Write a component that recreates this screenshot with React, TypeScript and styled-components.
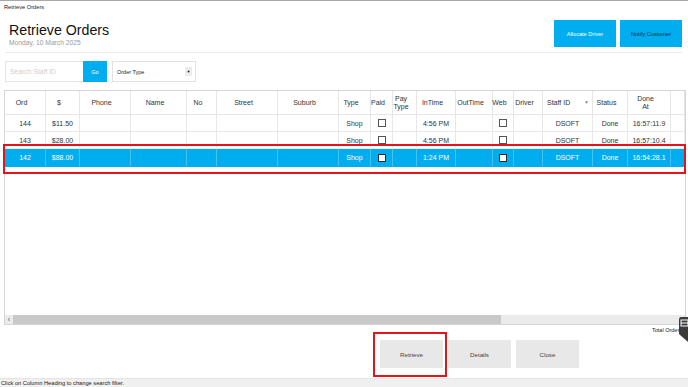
import React from "react";
import styled, { createGlobalStyle } from "styled-components";

const GlobalStyle = createGlobalStyle`
  html, body { margin: 0; padding: 0; background: #fff; }
  body { font-family: "Liberation Sans", Arial, sans-serif; color: #333; }
  * { box-sizing: border-box; }
`;

type Col = { k: string; label: string; w: number; sort?: boolean };

const cols: Col[] = [
  { k: "ord", label: "Ord", w: 41 },
  { k: "amt", label: "$", w: 34 },
  { k: "phone", label: "Phone", w: 51 },
  { k: "name", label: "Name", w: 56 },
  { k: "no", label: "No", w: 30 },
  { k: "street", label: "Street", w: 61 },
  { k: "suburb", label: "Suburb", w: 61 },
  { k: "type", label: "Type", w: 32 },
  { k: "paid", label: "Paid", w: 22 },
  { k: "payType", label: "Pay\nType", w: 24 },
  { k: "inTime", label: "InTime", w: 39 },
  { k: "outTime", label: "OutTime", w: 37 },
  { k: "web", label: "Web", w: 21 },
  { k: "driver", label: "Driver", w: 29 },
  { k: "staff", label: "Staff ID", w: 50, sort: true },
  { k: "status", label: "Status", w: 35 },
  { k: "doneAt", label: "Done\nAt", w: 43 },
  { k: "extra", label: "", w: 14 },
];

const template = cols.map((c) => `${c.w}px`).join(" ");

type Row = Record<string, string | boolean>;
const rows: Row[] = [
  { ord: "144", amt: "$11.50", type: "Shop", paid: false, inTime: "4:56 PM", web: false, staff: "DSOFT", status: "Done", doneAt: "16:57:11.9" },
  { ord: "143", amt: "$28.00", type: "Shop", paid: false, inTime: "4:56 PM", web: false, staff: "DSOFT", status: "Done", doneAt: "16:57:10.4" },
  { ord: "142", amt: "$88.00", type: "Shop", paid: false, inTime: "1:24 PM", web: false, staff: "DSOFT", status: "Done", doneAt: "16:54:28.1", selected: true },
];

const Window = styled.div`
  position: relative;
  width: 688px;
  height: 387px;
  overflow: hidden;
  display: flex;
  flex-direction: column;
  background: #fff;
`;

const TitleBar = styled.div`
  height: 14px;
  border-top: 1px solid #a8a8a8;
  padding: 2px 0 0 4px;
  font-size: 5.7px;
  line-height: 8px;
  color: #222;
`;

const Header = styled.div`
  height: 39px;
  margin: 0 6px 0 5px;
  border-bottom: 1px solid #ececec;
  display: flex;
  justify-content: space-between;
  align-items: flex-start;
`;

const TitleBlock = styled.div`
  padding: 8px 0 0 4px;
  display: flex;
  flex-direction: column;
`;

const Title = styled.div`
  font-size: 14.2px;
  line-height: 16px;
  color: #111;
`;

const DateText = styled.div`
  margin-top: 1px;
  font-size: 6.7px;
  line-height: 8px;
  color: #9a9a9a;
`;

const HeaderButtons = styled.div`
  display: flex;
  gap: 4px;
  margin-top: 6px;
`;

const BlueButton = styled.button<{ $dark?: boolean }>`
  width: 62px;
  height: 27px;
  border: none;
  padding: 0;
  background: #00aeef;
  color: ${(p) => (p.$dark ? "#1c2a36" : "#ffffff")};
  font-family: inherit;
  font-size: 5.6px;
`;

const Toolbar = styled.div`
  margin-top: 8px;
  height: 21px;
  padding-left: 5px;
  display: flex;
  align-items: stretch;
`;

const SearchInput = styled.div`
  width: 78px;
  border: 1px solid #e4e4e4;
  border-right: none;
  padding-left: 4px;
  display: flex;
  align-items: center;
  font-size: 6.8px;
  color: #cfcfcf;
`;

const GoButton = styled.div`
  width: 24px;
  background: #00aeef;
  color: #fff;
  font-size: 5.5px;
  display: flex;
  align-items: center;
  justify-content: center;
`;

const Select = styled.div`
  width: 84px;
  margin-left: 5px;
  border: 1px solid #e2e2e2;
  display: flex;
  align-items: center;
  justify-content: space-between;
  padding: 0 3px 0 4px;
  font-size: 5.5px;
  color: #222;
`;

const SelectArrow = styled.span`
  width: 7px;
  height: 9px;
  background: #ececec;
  display: flex;
  align-items: center;
  justify-content: center;
  font-size: 4px;
  color: #111;
`;

const TableBox = styled.div`
  margin: 8px 2px 0 4px;
  height: 235px;
  border: 1px solid #d6d6d6;
  display: flex;
  flex-direction: column;
  overflow: hidden;
`;

const GridRow = styled.div<{ $h: number; $sel?: boolean }>`
  display: grid;
  grid-template-columns: ${template};
  height: ${(p) => p.$h}px;
  flex: none;
  background: ${(p) => (p.$sel ? "#00aeef" : "#fff")};
  color: ${(p) => (p.$sel ? "#fff" : "#333")};
`;

const HeadCell = styled.div<{ $sort?: boolean }>`
  border-right: 1px solid #e6e6e6;
  border-bottom: 1px solid #e6e6e6;
  display: flex;
  align-items: center;
  justify-content: ${(p) => (p.$sort ? "space-between" : "center")};
  padding: ${(p) => (p.$sort ? "0 3px 0 4px" : "0 7px 0 0")};
  font-size: 7px;
  line-height: 7.5px;
  text-align: center;
  white-space: pre-line;
  color: #333;
`;

const SortGlyph = styled.span`
  font-size: 5px;
  color: #888;
`;

const Cell = styled.div<{ $sel?: boolean }>`
  border-right: 1px solid ${(p) => (p.$sel ? "#43c3f3" : "#e8e8e8")};
  border-bottom: 1px solid ${(p) => (p.$sel ? "#00aeef" : "#e8e8e8")};
  display: flex;
  align-items: center;
  justify-content: center;
  font-size: 7px;
  white-space: nowrap;
  overflow: hidden;
  color: ${(p) => (p.$sel ? "#ffffff" : "#333333")};
`;

const Check = styled.span<{ $sel?: boolean }>`
  width: 8px;
  height: 8px;
  border: 1px solid ${(p) => (p.$sel ? "#2a2a2a" : "#555")};
  background: #fff;
`;

const Filler = styled.div`
  flex: 1;
  background: #fff;
`;

const HScroll = styled.div`
  height: 9px;
  flex: none;
  background: #ebebeb;
  display: flex;
  align-items: center;
`;

const ScrollArrow = styled.span`
  width: 8px;
  font-size: 7px;
  line-height: 9px;
  color: #555;
  text-align: center;
`;

const ScrollThumb = styled.div`
  width: 488px;
  height: 9px;
  background: #c9c9c9;
`;

const TotalRow = styled.div`
  height: 9px;
  padding-right: 6px;
  display: flex;
  justify-content: flex-end;
  align-items: center;
  font-size: 5.5px;
  color: #222;
`;

const ButtonRow = styled.div`
  margin-top: 6px;
  padding-left: 380px;
  display: flex;
  gap: 5px;
`;

const GrayButton = styled.button`
  width: 63px;
  height: 28px;
  border: none;
  padding: 0;
  background: #e8e8e8;
  color: #444;
  font-family: inherit;
  font-size: 6.2px;
`;

const Spacer = styled.div`
  flex: 1;
`;

const StatusBar = styled.div`
  height: 9px;
  background: #f0f0f0;
  border-top: 1px solid #e4e4e4;
  padding-left: 1px;
  font-size: 5.7px;
  line-height: 8px;
  color: #222;
`;

const Highlight = styled.div<{ $l: number; $t: number; $w: number; $h: number }>`
  position: absolute;
  left: ${(p) => p.$l}px;
  top: ${(p) => p.$t}px;
  width: ${(p) => p.$w}px;
  height: ${(p) => p.$h}px;
  border: 2px solid #e3151b;
  pointer-events: none;
`;

const SideTab = styled.div`
  position: absolute;
  right: 0;
  top: 317px;
  width: 10px;
  height: 25px;
`;

function renderCell(r: Row, c: Col) {
  const v = r[c.k];
  if (c.k === "paid" || c.k === "web") return <Check $sel={!!r.selected} />;
  return typeof v === "string" ? v : "";
}

export default function App() {
  return (
    <>
      <GlobalStyle />
      <Window>
        <TitleBar>Retrieve Orders</TitleBar>
        <Header>
          <TitleBlock>
            <Title>Retrieve Orders</Title>
            <DateText>Monday, 10 March 2025</DateText>
          </TitleBlock>
          <HeaderButtons>
            <BlueButton>Allocate Driver</BlueButton>
            <BlueButton $dark>Notify Customer</BlueButton>
          </HeaderButtons>
        </Header>
        <Toolbar>
          <SearchInput>Search Staff ID</SearchInput>
          <GoButton>Go</GoButton>
          <Select>
            <span>Order Type</span>
            <SelectArrow>▼</SelectArrow>
          </Select>
        </Toolbar>
        <TableBox>
          <GridRow $h={24}>
            {cols.map((c) => (
              <HeadCell key={c.k} $sort={c.sort}>
                <span>{c.label}</span>
                {c.sort && <SortGlyph>▼</SortGlyph>}
              </HeadCell>
            ))}
          </GridRow>
          {rows.map((r, i) => (
            <GridRow key={i} $h={r.selected ? 18 : 17} $sel={!!r.selected}>
              {cols.map((c) => (
                <Cell key={c.k} $sel={!!r.selected}>
                  {renderCell(r, c)}
                </Cell>
              ))}
            </GridRow>
          ))}
          <Filler />
          <HScroll>
            <ScrollArrow>‹</ScrollArrow>
            <ScrollThumb />
          </HScroll>
        </TableBox>
        <TotalRow>Total Orders</TotalRow>
        <ButtonRow>
          <GrayButton>Retrieve</GrayButton>
          <GrayButton>Details</GrayButton>
          <GrayButton>Close</GrayButton>
        </ButtonRow>
        <Spacer />
        <StatusBar>Click on Column Heading to change search filter.</StatusBar>

        <Highlight $l={3} $t={144} $w={683} $h={30} />
        <Highlight $l={373} $t={332} $w={74} $h={45} />
        <SideTab>
          <svg width="10" height="25" viewBox="0 0 10 25">
            <path d="M3 0 H10 V25 L1 17 V3 Q1 0 3 0 Z" fill="#3b3b3b" />
            <rect x="3" y="3" width="7" height="6" fill="none" stroke="#fff" strokeWidth="1" />
            <line x1="3" y1="6" x2="10" y2="6" stroke="#fff" strokeWidth="1" />
          </svg>
        </SideTab>
      </Window>
    </>
  );
}
